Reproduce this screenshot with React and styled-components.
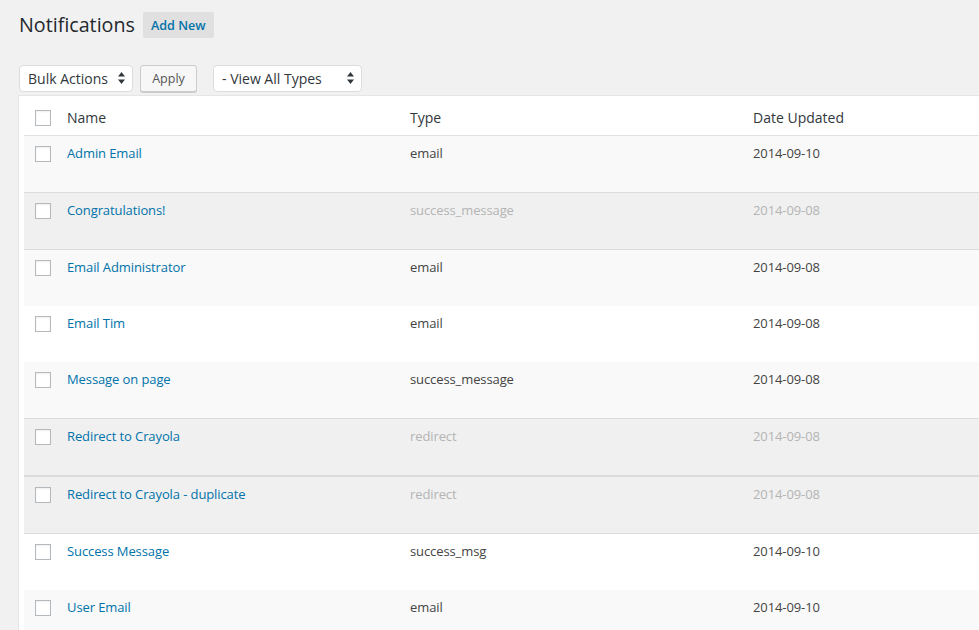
import React from "react";
import styled, { createGlobalStyle } from "styled-components";

const Global = createGlobalStyle`
  html, body { margin: 0; padding: 0; background: #f1f1f1; overflow: hidden; }
  body { font-family: "Open Sans", "Noto Sans", sans-serif; color: #444; }
`;

const Page = styled.div`
  width: 979px;
  height: 630px;
  overflow: hidden;
  padding-left: 18px;
  box-sizing: border-box;
`;

const TitleRow = styled.div`
  display: flex;
  align-items: center;
  gap: 8px;
  padding: 12px 0 0 1px;
  height: 26px;
`;

const Title = styled.h1`
  margin: 0;
  font-size: 19.7px;
  font-weight: 400;
  color: #23282d;
  line-height: 26px;
`;

const AddNew = styled.a`
  display: inline-flex;
  align-items: center;
  height: 26px;
  padding: 0 8px;
  background: #e0e0e0;
  border-radius: 2px;
  color: #0073aa;
  font-size: 12.6px;
  font-weight: 600;
  text-decoration: none;
`;

const Toolbar = styled.div`
  display: flex;
  align-items: center;
  margin-top: 27px;
  padding-left: 1px;
  height: 27px;
`;

const Select = styled.div`
  box-sizing: border-box;
  display: flex;
  align-items: center;
  justify-content: space-between;
  width: ${(p) => p.$w}px;
  height: 27px;
  margin-right: ${(p) => p.$mr}px;
  padding: 0 7px 1px 8px;
  background: #fff;
  border: 1px solid #ddd;
  border-radius: 4px;
  font-size: 14px;
  color: #32373c;
`;

const Apply = styled.button`
  box-sizing: border-box;
  width: 57px;
  height: 27px;
  margin-right: 16px;
  padding: 0;
  background: #f7f7f7;
  border: 1px solid #ccc;
  border-radius: 3px;
  box-shadow: 0 1px 0 #ccc;
  font-family: inherit;
  font-size: 12.5px;
  color: #555;
`;

const TableBox = styled.div`
  margin-top: 3px;
  background: #fff;
  border: 1px solid #e5e5e5;
  border-right: none;
  padding-left: 5px;
`;

const Row = styled.div`
  display: grid;
  grid-template-columns: 33px 343px 343px 1fr;
  box-sizing: border-box;
  height: ${(p) => (p.$head ? 40 : p.$inactive ? 58 : 56)}px;
  background: ${(p) =>
    p.$inactive ? "#f0f0f0" : p.$odd ? "#f9f9f9" : "#fff"};
  border-top: ${(p) => (p.$inactive ? "1px solid #dcdcdc" : "none")};
  border-bottom: ${(p) =>
    p.$head ? "1px solid #e1e1e1" : p.$inactive ? "1px solid #dcdcdc" : "none"};
`;

const CheckCell = styled.div`
  padding: ${(p) => (p.$head ? "14px" : "10px")} 0 0 11px;
`;

const Box = styled.span`
  display: block;
  box-sizing: border-box;
  width: 16px;
  height: 16px;
  background: #fff;
  border: 1px solid #b4b9be;
  box-shadow: inset 0 1px 2px rgba(0, 0, 0, 0.07);
`;

const Cell = styled.div`
  padding: ${(p) => (p.$head ? "12px" : "8px")} 10px 0 10px;
  font-size: ${(p) => (p.$head ? 14 : 13)}px;
  letter-spacing: ${(p) => (p.$head ? "0" : "-0.1px")};
  line-height: 19px;
  color: ${(p) => (p.$dim ? "#b4b4b4" : p.$head ? "#32373c" : "#444")};
  white-space: nowrap;
`;

const Link = styled.a`
  color: #0073aa;
  text-decoration: none;
`;

const Arrows = () => (
  <svg width="7" height="12" viewBox="0 0 7 12">
    <path d="M3.5 0 L7 4.5 L0 4.5 Z" fill="#32373c" />
    <path d="M3.5 12 L7 7.5 L0 7.5 Z" fill="#32373c" />
  </svg>
);

const rows = [
  ["Admin Email", "email", "2014-09-10", false],
  ["Congratulations!", "success_message", "2014-09-08", true],
  ["Email Administrator", "email", "2014-09-08", false],
  ["Email Tim", "email", "2014-09-08", false],
  ["Message on page", "success_message", "2014-09-08", false],
  ["Redirect to Crayola", "redirect", "2014-09-08", true],
  ["Redirect to Crayola - duplicate", "redirect", "2014-09-08", true],
  ["Success Message", "success_msg", "2014-09-10", false],
  ["User Email", "email", "2014-09-10", false],
];

export default function App() {
  return (
    <Page>
      <Global />
      <TitleRow>
        <Title>Notifications</Title>
        <AddNew>Add New</AddNew>
      </TitleRow>
      <Toolbar>
        <Select $w={114} $mr={7}>
          <span>Bulk Actions</span>
          <Arrows />
        </Select>
        <Apply>Apply</Apply>
        <Select $w={149} $mr={0}>
          <span>- View All Types</span>
          <Arrows />
        </Select>
      </Toolbar>
      <TableBox>
        <Row $head>
          <CheckCell $head>
            <Box />
          </CheckCell>
          <Cell $head>Name</Cell>
          <Cell $head>Type</Cell>
          <Cell $head>Date Updated</Cell>
        </Row>
        {rows.map(([name, type, date, inactive], i) => (
          <Row key={name} $odd={i % 2 === 0} $inactive={inactive}>
            <CheckCell>
              <Box />
            </CheckCell>
            <Cell>
              <Link>{name}</Link>
            </Cell>
            <Cell $dim={inactive}>{type}</Cell>
            <Cell $dim={inactive}>{date}</Cell>
          </Row>
        ))}
      </TableBox>
    </Page>
  );
}
